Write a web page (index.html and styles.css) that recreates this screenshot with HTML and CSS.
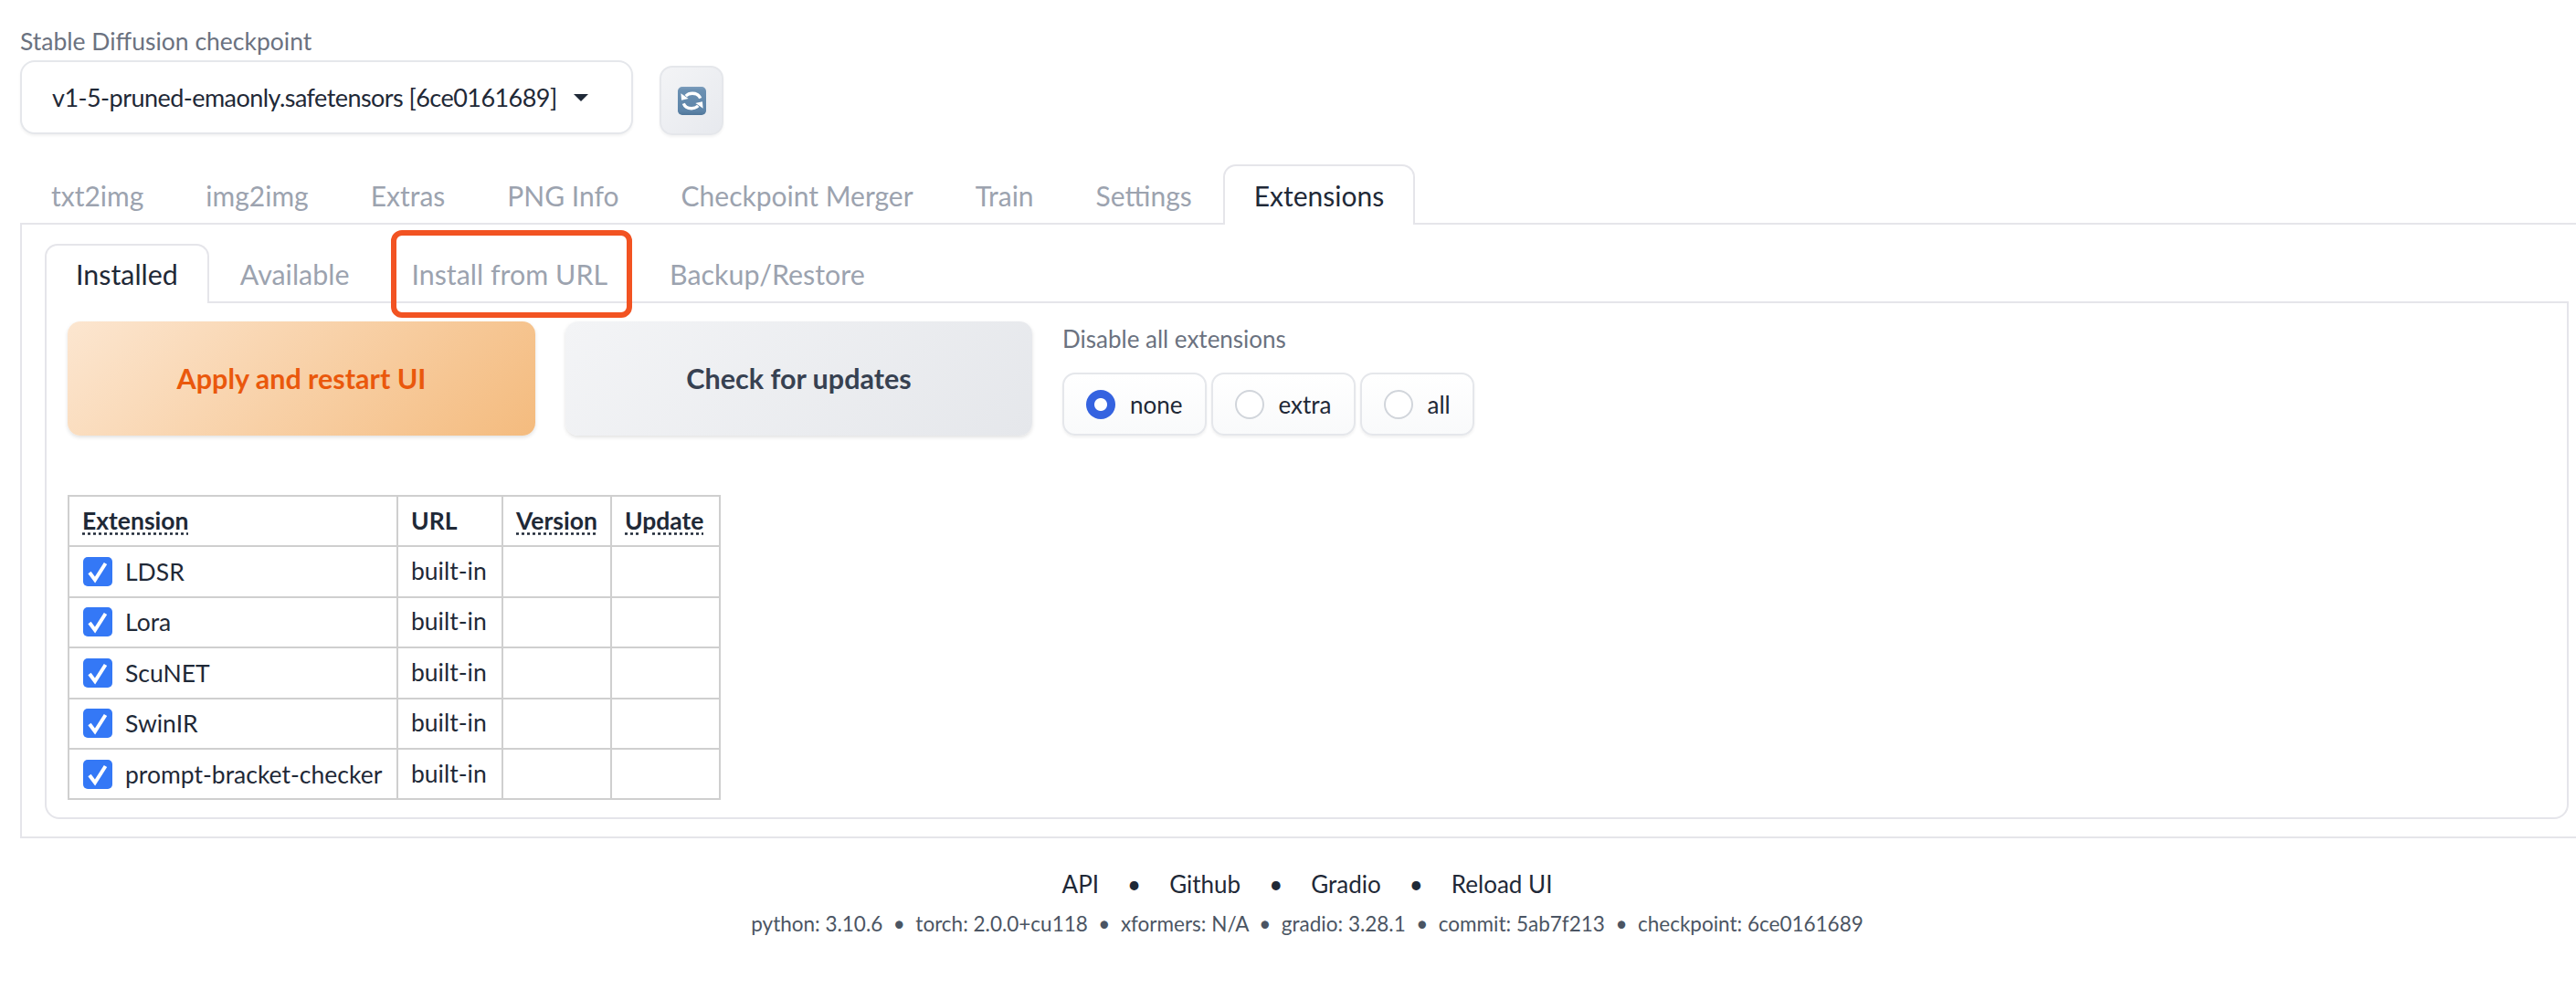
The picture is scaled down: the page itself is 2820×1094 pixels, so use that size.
FILE: index.html
```html
<!DOCTYPE html>
<html lang="en">
<head>
<meta charset="utf-8">
<title>Stable Diffusion</title>
<link rel="stylesheet" href="styles.css">
</head>
<body>
<div class="app">
  <div class="ckpt-label">Stable Diffusion checkpoint</div>
  <div class="ckpt-row">
    <div class="select">
      <span>v1-5-pruned-emaonly.safetensors [6ce0161689]</span>
      <i class="caret"></i>
    </div>
    <button class="refresh">
      <svg class="refresh-icon" viewBox="0 0 32 32" width="31" height="31">
        <defs>
          <linearGradient id="rf" x1="0" y1="0" x2="0" y2="1">
            <stop offset="0" stop-color="#7c9dbc"/>
            <stop offset="0.12" stop-color="#6b90b2"/>
            <stop offset="0.85" stop-color="#5d84a8"/>
            <stop offset="1" stop-color="#4f7699"/>
          </linearGradient>
        </defs>
        <rect x="0" y="0" width="32" height="32" rx="5" fill="url(#rf)"/>
        <g>
          <path d="M25.5 13C24 9 20.5 7.5 16.5 7.5c-3 0-5.5 1-7.5 3" fill="none" stroke="#fff" stroke-width="3.4"/>
          <path d="M3.5 7.5l.7 7.8 7.8-1.8z" fill="#fff"/>
        </g>
        <g transform="rotate(180 16 16)">
          <path d="M25.5 13C24 9 20.5 7.5 16.5 7.5c-3 0-5.5 1-7.5 3" fill="none" stroke="#fff" stroke-width="3.4"/>
          <path d="M3.5 7.5l.7 7.8 7.8-1.8z" fill="#fff"/>
        </g>
      </svg>
    </button>
  </div>

  <nav class="tabs">
    <span class="tab">txt2img</span>
    <span class="tab">img2img</span>
    <span class="tab">Extras</span>
    <span class="tab">PNG Info</span>
    <span class="tab">Checkpoint Merger</span>
    <span class="tab">Train</span>
    <span class="tab">Settings</span>
    <span class="tab active">Extensions</span>
  </nav>

  <section class="panel">
    <nav class="tabs subtabs">
      <span class="tab active">Installed</span>
      <span class="tab">Available</span>
      <span class="tab">Install from URL<b class="highlight"></b></span>
      <span class="tab">Backup/Restore</span>
    </nav>
    <div class="inner">
      <div class="actions">
        <button class="btn primary">Apply and restart UI</button>
        <button class="btn secondary">Check for updates</button>
        <div class="radio-block">
          <div class="radio-label">Disable all extensions</div>
          <div class="radios">
            <label class="radio"><i class="dot on"></i>none</label>
            <label class="radio"><i class="dot"></i>extra</label>
            <label class="radio"><i class="dot"></i>all</label>
          </div>
        </div>
      </div>
      <table class="ext">
        <colgroup><col class="c1"><col class="c2"><col class="c3"><col class="c4"></colgroup>
        <thead>
          <tr><th><abbr>Extension</abbr></th><th>URL</th><th><abbr>Version</abbr></th><th><abbr>Update</abbr></th></tr>
        </thead>
        <tbody>
          <tr><td><div class="name"><i class="check"><svg viewBox="0 0 32 32" width="32" height="32"><path d="M7 17l6 8L24.500 7" fill="none" stroke="#fff" stroke-width="4"/></svg></i>LDSR</div></td><td>built-in</td><td></td><td></td></tr>
          <tr><td><div class="name"><i class="check"><svg viewBox="0 0 32 32" width="32" height="32"><path d="M7 17l6 8L24.500 7" fill="none" stroke="#fff" stroke-width="4"/></svg></i>Lora</div></td><td>built-in</td><td></td><td></td></tr>
          <tr><td><div class="name"><i class="check"><svg viewBox="0 0 32 32" width="32" height="32"><path d="M7 17l6 8L24.500 7" fill="none" stroke="#fff" stroke-width="4"/></svg></i>ScuNET</div></td><td>built-in</td><td></td><td></td></tr>
          <tr><td><div class="name"><i class="check"><svg viewBox="0 0 32 32" width="32" height="32"><path d="M7 17l6 8L24.500 7" fill="none" stroke="#fff" stroke-width="4"/></svg></i>SwinIR</div></td><td>built-in</td><td></td><td></td></tr>
          <tr><td><div class="name"><i class="check"><svg viewBox="0 0 32 32" width="32" height="32"><path d="M7 17l6 8L24.500 7" fill="none" stroke="#fff" stroke-width="4"/></svg></i>prompt-bracket-checker</div></td><td>built-in</td><td></td><td></td></tr>
        </tbody>
      </table>
    </div>
  </section>

  <footer class="footer">
    <div class="links"><span>API</span><span class="sep">•</span><span>Github</span><span class="sep">•</span><span>Gradio</span><span class="sep">•</span><span>Reload UI</span></div>
    <div class="versions">python: 3.10.6&nbsp;&nbsp;•&nbsp;&nbsp;torch: 2.0.0+cu118&nbsp;&nbsp;•&nbsp;&nbsp;xformers: N/A&nbsp;&nbsp;•&nbsp;&nbsp;gradio: 3.28.1&nbsp;&nbsp;•&nbsp;&nbsp;commit: 5ab7f213&nbsp;&nbsp;•&nbsp;&nbsp;checkpoint: 6ce0161689</div>
  </footer>
</div>
</body>
</html>
```
FILE: styles.css
```css
* { box-sizing: border-box; }
html, body { margin: 0; padding: 0; background: #fff; }
body { overflow: hidden; font-family: "Lato", "Liberation Sans", sans-serif; color: #1f2937; height: 1094px; }
.app { padding: 29px 0 0 22px; width: 2830px; }

.ckpt-label { font-size: 26.5px; line-height: 32px; height: 37px; color: #6b7280; }
.ckpt-row { display: flex; align-items: flex-start; gap: 29px; height: 114px; }
.select { width: 671px; height: 81px; display: flex; align-items: center; gap: 18px; padding: 0 0 0 33px; background: #fff; border: 2px solid #e5e7eb; border-radius: 16px; font-size: 27px; letter-spacing: -.55px; white-space: nowrap; box-shadow: 0 2px 3px rgba(0,0,0,.05); }
.caret { width: 0; height: 0; border-left: 8px solid transparent; border-right: 8px solid transparent; border-top: 8px solid #1f2937; }
.refresh { width: 70px; height: 76px; margin-top: 6px; padding: 0; display: flex; align-items: center; justify-content: center; border: 2px solid #e5e7eb; border-radius: 14px; background: linear-gradient(135deg, #f3f4f6, #e7e9ee); box-shadow: 0 2px 3px rgba(0,0,0,.05); }

.tabs { display: flex; height: 66px; position: relative; z-index: 1; }
.tab { position: relative; height: 66px; padding: 0 32px; border: 2px solid transparent; border-bottom: 0; display: flex; align-items: center; font-size: 30px; color: #9ca3af; white-space: nowrap; }
.tab.active { color: #1f2937; background: #fff; border-color: #e5e5ea; border-radius: 14px 14px 0 0; }
.panel { margin-top: -2px; padding: 21px 0 20px 25px; height: 674px; border: 2px solid #e5e5ea; border-right: 0; }
.subtabs { height: 65px; }
.subtabs .tab { height: 65px; padding-bottom: 2px; font-size: 30.4px; }
.highlight { position: absolute; left: 10px; right: 5px; top: -17px; height: 96px; border: 6px solid #f25322; border-radius: 12px; }

.inner { margin-top: -2px; width: 2763px; height: 567px; padding: 20px 23px; border: 2px solid #e5e5ea; border-radius: 0 0 16px 16px; }
.actions { display: flex; align-items: flex-start; height: 190px; }
.btn { height: 125px; padding-bottom: 2px; border: 0; border-radius: 14px; font: 700 30.5px "Lato", sans-serif; box-shadow: 0 2px 4px rgba(0,0,0,.12); }
.primary { width: 512px; color: #ea580c; background: linear-gradient(135deg, #fce6d0, #f4bb7e); }
.secondary { width: 511px; margin-left: 33px; color: #374151; background: linear-gradient(135deg, #f3f4f6, #e5e7eb); }
.radio-block { margin-left: 33px; }
.radio-label { font-size: 26px; line-height: 38px; height: 56px; color: #6b7280; }
.radios { display: flex; gap: 5px; }
.radio { height: 69px; display: flex; align-items: center; gap: 16px; padding: 0 24px; font-size: 26px; border: 2px solid #e5e7eb; border-radius: 14px; background: linear-gradient(#fff, #f9fafb); box-shadow: 0 2px 3px rgba(0,0,0,.06); }
.dot { width: 32px; height: 32px; border-radius: 50%; border: 2px solid #d1d5db; background: #fff; }
.dot.on { border: 0; background: radial-gradient(circle, #fff 0 6.5px, #3563e0 7.5px); }

.ext { border-collapse: collapse; table-layout: fixed; width: 713px; font-size: 26.5px; }
.c1 { width: 360px; } .c2 { width: 115px; } .c3 { width: 119px; } .c4 { width: 119px; }
.ext th, .ext td { border: 2px solid #cfcfcf; height: 55.4px; padding: 0 14px 2px; text-align: left; white-space: nowrap; }
.ext th { font-weight: 700; }
abbr { text-decoration: underline dotted; text-underline-offset: 3px; }
.name { display: flex; align-items: center; gap: 14px; margin: 2px 0 0 1px; }
.check { width: 32px; height: 32px; border-radius: 5px; background: #3478f6; display: block; }
.check svg { display: block; }

.footer { margin: 34px 0 0 0; width: 2818px; text-align: center; }
.links { display: flex; justify-content: center; font-size: 26px; line-height: 32px; height: 46px; }
.sep { margin: 0 31px; }
.versions { font-size: 22.5px; line-height: 28px; color: #4b5563; }
```
